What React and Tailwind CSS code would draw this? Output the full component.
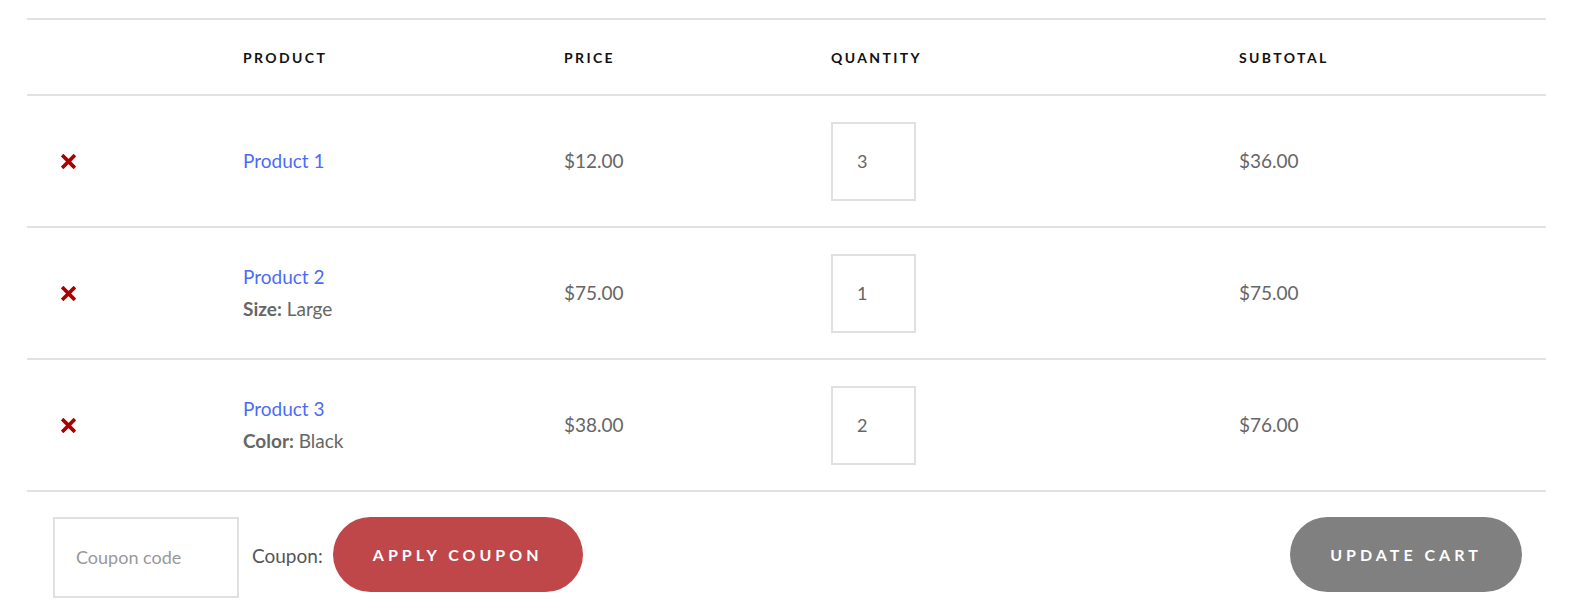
import React from 'react';

const items = [
  { name: 'Product 1', price: '$12.00', qty: 3, subtotal: '$36.00' },
  { name: 'Product 2', meta: ['Size:', 'Large'], price: '$75.00', qty: 1, subtotal: '$75.00' },
  { name: 'Product 3', meta: ['Color:', 'Black'], price: '$38.00', qty: 2, subtotal: '$76.00' },
];

const cols = 'grid grid-cols-[216px_321px_267px_408px_1fr] items-center';

const RemoveIcon = () => (
  <svg width="15" height="15" viewBox="0 0 14 14" className="block">
    <path d="M2.2 2.2 L11.8 11.8 M11.8 2.2 L2.2 11.8" stroke="#aa0000" strokeWidth="3.4" strokeLinecap="square" />
  </svg>
);

export default function App() {
  return (
    <div className="w-full h-[616px] overflow-hidden bg-white pt-[18px] px-[27px] font-['Lato','Open_Sans',sans-serif] text-[#666]">
      <div className="w-[1519px]">
        {/* Header */}
        <div className={`${cols} h-[78px] border-t-2 border-b-2 border-[#e2e2e2] text-[14px] font-bold tracking-[0.17em] uppercase text-[#111]`}>
          <div />
          <div>Product</div>
          <div>Price</div>
          <div>Quantity</div>
          <div>Subtotal</div>
        </div>

        {items.map((it) => (
          <div key={it.name} className={`${cols} h-[132px] border-b-2 border-[#e2e2e2] text-[19px]`}>
            <div className="pl-[34px]">
              <button className="block"><RemoveIcon /></button>
            </div>
            <div className="leading-[32px]">
              <a href="#" className="block text-[#4a6cf7]">{it.name}</a>
              {it.meta && (
                <div className="text-[#666]">
                  <span className="font-bold">{it.meta[0]}</span> {it.meta[1]}
                </div>
              )}
            </div>
            <div>{it.price}</div>
            <div>
              <div className="w-[85px] h-[79px] border-2 border-[#e0e0e0] flex items-center pl-[24px] text-[18px]">
                {it.qty}
              </div>
            </div>
            <div>{it.subtotal}</div>
          </div>
        ))}

        {/* Actions */}
        <div className="flex items-start justify-between pt-[25px] pl-[26px] pr-[24px]">
          <div className="flex items-start">
            <div className="w-[186px] h-[81px] border-2 border-[#e0e0e0] flex items-center pl-[21px] text-[18px] text-[#999]">
              Coupon code
            </div>
            <span className="ml-[13px] mr-[10px] mt-[25px] text-[19px] text-[#555]">Coupon:</span>
            <button className="w-[250px] h-[75px] rounded-full bg-[#bf474a] text-white text-[16px] font-bold tracking-[0.25em] uppercase">
              Apply Coupon
            </button>
          </div>
          <button className="w-[232px] h-[75px] rounded-full bg-[#808080] text-white text-[16px] font-bold tracking-[0.25em] uppercase">
            Update Cart
          </button>
        </div>
      </div>
    </div>
  );
}
